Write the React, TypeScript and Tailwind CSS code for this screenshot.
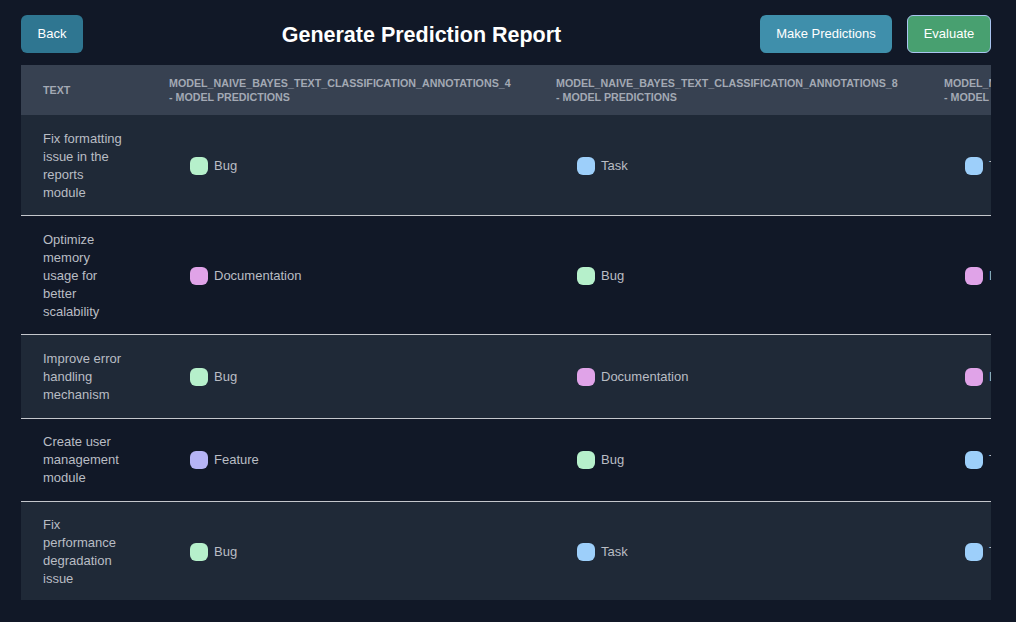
import React from "react";

type Label = "Bug" | "Task" | "Documentation" | "Feature";

const dotColor: Record<Label, string> = {
  Bug: "bg-[#b6f0cb]",
  Task: "bg-[#9dcffa]",
  Documentation: "bg-[#e0a3e8]",
  Feature: "bg-[#b6b4f6]",
};

const rows: { text: string; preds: [Label, Label, Label] }[] = [
  { text: "Fix formatting issue in the reports module", preds: ["Bug", "Task", "Task"] },
  { text: "Optimize memory usage for better scalability", preds: ["Documentation", "Bug", "Documentation"] },
  { text: "Improve error handling mechanism", preds: ["Bug", "Documentation", "Documentation"] },
  { text: "Create user management module", preds: ["Feature", "Bug", "Task"] },
  { text: "Fix performance degradation issue", preds: ["Bug", "Task", "Task"] },
];

const headers = [
  "MODEL_NAIVE_BAYES_TEXT_CLASSIFICATION_ANNOTATIONS_4",
  "MODEL_NAIVE_BAYES_TEXT_CLASSIFICATION_ANNOTATIONS_8",
  "MODEL_NAIVE_BAYES_TEXT_CLASSIFICATION_ANNOTATIONS_12",
];

function Pred({ label }: { label: Label }) {
  return (
    <div className="flex items-center gap-[6px] pl-[21px]">
      <span className={`w-[18px] h-[18px] rounded-[6px] shrink-0 ${dotColor[label]}`} />
      <span className="whitespace-nowrap">{label}</span>
    </div>
  );
}

export default function App() {
  return (
    <div
      className="w-[1016px] h-[622px] bg-[#111827] pl-[21px] pr-[25px] pt-[15px] overflow-hidden"
      style={{ fontFamily: "'Liberation Sans', Arial, sans-serif" }}
    >
      <div className="flex items-center justify-between h-[38px]">
        <button className="h-[38px] w-[62px] rounded-[6px] bg-[#2f7691] text-white text-[13px]">Back</button>
        <h1 className="text-white text-[21.5px] font-bold pt-[2px]">Generate Prediction Report</h1>
        <div className="flex items-center gap-[15px]">
          <button className="h-[38px] w-[132px] rounded-[6px] bg-[#3f8fab] text-white text-[13px]">
            Make Predictions
          </button>
          <button className="h-[38px] w-[84px] rounded-[6px] bg-[#48a070] border-[1.5px] border-[#a9c4f0] text-white text-[13px]">
            Evaluate
          </button>
        </div>
      </div>

      <div className="mt-[12px] w-[970px] h-[535px] overflow-hidden">
        <table className="table-fixed border-collapse w-[1420px] text-left">
          <colgroup>
            <col className="w-[126px]" />
            <col className="w-[387px]" />
            <col className="w-[388px]" />
            <col className="w-[519px]" />
          </colgroup>
          <thead>
            <tr className="bg-[#374151] h-[50px]">
              <th className="px-[22px] py-[11px] text-[10.7px] leading-[14px] font-bold text-[#a3a9b4] align-middle">
                TEXT
              </th>
              {headers.map((h, i) => (
                <th
                  key={i}
                  className="px-[22px] py-[11px] text-[10.7px] leading-[14px] font-bold text-[#a3a9b4] align-middle whitespace-nowrap"
                >
                  {h}
                  <br />- MODEL PREDICTIONS
                </th>
              ))}
            </tr>
          </thead>
          <tbody>
            {rows.map((r, i) => (
              <tr
                key={i}
                className={`${i % 2 === 0 ? "bg-[#1f2937]" : "bg-[#111827]"} ${
                  i < rows.length - 1 ? "border-b border-[#c4c7cc]" : ""
                }`}
              >
                <td className="px-[22px] pt-[14.5px] pb-[13.7px] text-[13px] leading-[18px] text-[#b9bdc4] align-middle">
                  {r.text}
                </td>
                {r.preds.map((p, j) => (
                  <td
                    key={j}
                    className="px-[22px] pt-[14.5px] pb-[13.7px] text-[13px] leading-[18px] text-[#b9bdc4] align-middle"
                  >
                    <Pred label={p} />
                  </td>
                ))}
              </tr>
            ))}
          </tbody>
        </table>
      </div>
    </div>
  );
}
